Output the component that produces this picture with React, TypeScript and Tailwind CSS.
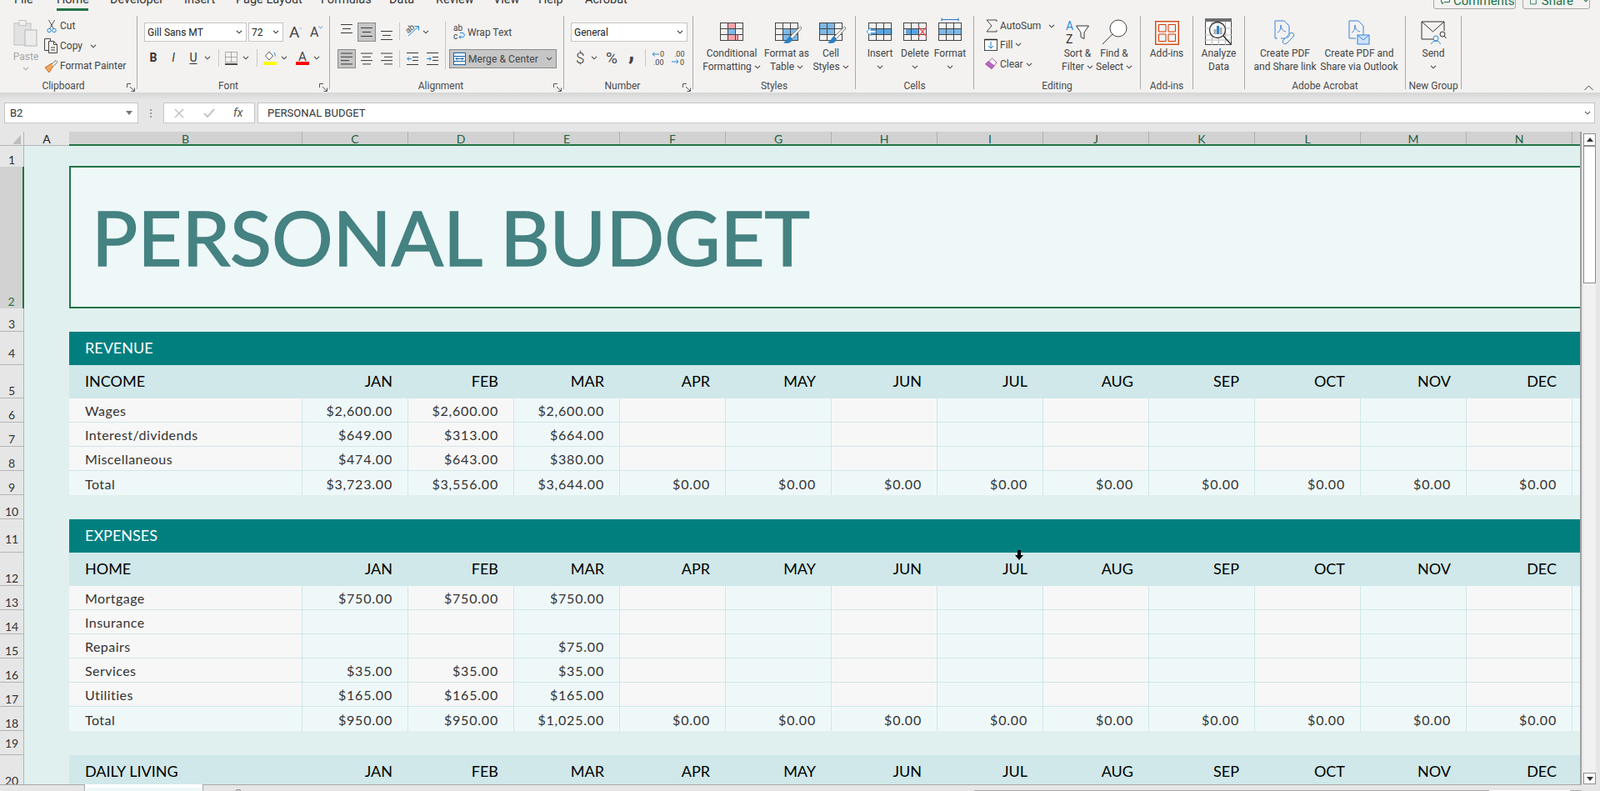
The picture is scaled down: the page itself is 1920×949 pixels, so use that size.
import React from "react";

const Chev = ({ c = "#444" }: { c?: string }) => (
  <svg width="8" height="5" viewBox="0 0 8 5" className="shrink-0"><path d="M1 .8 4 3.8 7 .8" fill="none" stroke={c} strokeWidth="1.1" /></svg>
);
const Launcher = () => (
  <svg width="10" height="10" viewBox="0 0 10 10" className="absolute right-[2px] bottom-[-3px]"><path d="M.5 5V.5H5M4 4l5 5M9.5 5.500v4h-4" fill="none" stroke="#555" /></svg>
);
const Sep = ({ h = "h-[21px]" }: { h?: string }) => <div className={`w-px bg-[#c8c8c8] shrink-0 ${h}`} />;

const Lines = ({ kind }: { kind: "l" | "c" | "r" }) => {
  const xs = kind === "l" ? [[0, 14], [0, 14], [0, 10], [0, 14]] : kind === "c" ? [[0, 14], [2, 12], [0, 14], [2, 12]] : [[0, 14], [4, 14], [0, 14], [4, 14]];
  return (
    <svg width="14" height="15" viewBox="0 0 14 15">
      {xs.map((p, i) => <line key={i} x1={p[0]} x2={p[1]} y1={1 + i * 4.3} y2={1 + i * 4.3} stroke="#3a3a3a" />)}
    </svg>
  );
};
const VAlign = () => (
  <svg width="14" height="11" viewBox="0 0 14 11"><path d="M0 .5h14M2 5.500h10M0 10.500h14" stroke="#3a3a3a" fill="none" /></svg>
);
const Indent = ({ dir }: { dir: "in" | "out" }) => (
  <svg width="14" height="15" viewBox="0 0 14 15">
    <path d="M0 .5h14M7 5.500h7M7 9.500h7M0 14.500h14" stroke="#3a3a3a" fill="none" />
    {dir === "out" ? <path d="M6 7.500H0.8M3 5.300.8 7.500 3 9.700" stroke="#1e88d8" fill="none" /> : <path d="M0 7.500h5.200M3 5.300l2.200 2.200L3 9.700" stroke="#1e88d8" fill="none" />}
  </svg>
);

const Grid = ({ children, after }: { children?: React.ReactNode; after?: React.ReactNode }) => (
  <svg width="32" height="24" viewBox="0 0 32 24" className="overflow-visible">
    {children}
    <rect x="2.500" y="1.500" width="27" height="21" fill="none" stroke="#444" />
    <path d="M11.500 1.500v21M20.500 1.500v21M2.500 8.500h27M2.500 15.500h27" stroke="#444" fill="none" />
    {after}
  </svg>
);
const Brush = () => (
  <g>
    <path d="M32.500 6 20 18l2.500 2.500L34 8z" fill="#fff" stroke="#777" />
    <path d="M20 17.500c-3 .5-3 5-8 7.500 4 2 10 1 11-4.500z" fill="#2e7fc1" />
  </g>
);

const Big = ({ w, icon, a, b, chev, gray }: { w: string; icon: React.ReactNode; a: string; b?: string; chev?: boolean; gray?: boolean }) => (
  <div className={`${w} flex flex-col items-center shrink-0`}>
    <div className="h-[37px] flex items-center justify-center">{icon}</div>
    <div className={`leading-[16px] whitespace-nowrap ${gray ? "text-[#a6a6a6]" : ""}`}>{a}</div>
    <div className="h-[16px] leading-[16px] whitespace-nowrap flex items-center gap-[3px]">
      {b && <span>{b}</span>}
      {chev && <Chev c={gray ? "#a6a6a6" : "#444"} />}
    </div>
  </div>
);

const Group = ({ w, label, launcher, lab = "", children }: { w: string; label?: string; launcher?: boolean; lab?: string; children: React.ReactNode }) => (
  <div className={`${w} h-[88px] shrink-0 relative border-r border-[#aaaaaa] flex flex-col`}>
    <div className="h-[76px] shrink-0">{children}</div>
    <div className={`h-[12px] leading-[16px] text-center whitespace-nowrap text-[#4a4a4a] ${lab}`}>{label}</div>
    {launcher && <Launcher />}
  </div>
);

const Combo = ({ w, text }: { w: string; text: string }) => (
  <div className={`${w} h-[23px] shrink-0 bg-white border border-[#c6c6c6] flex items-center justify-between pl-[3px] pr-[4px] text-[#222]`}>
    <span>{text}</span><Chev c="#333" />
  </div>
);

const TABS: [string, string][] = [
  ["File", "w-[51px]"], ["Home", "w-[64px]"], ["Developer", "w-[89px]"], ["Insert", "w-[62px]"], ["Page Layout", "w-[102px]"],
  ["Formulas", "w-[82px]"], ["Data", "w-[56px]"], ["Review", "w-[69px]"], ["View", "w-[54px]"], ["Help", "w-[56px]"], ["Acrobat", "w-[70px]"],
];

function TopTabs() {
  return (
    <div className="h-[19px] overflow-hidden flex pl-[17px] text-[14.5px] text-[#333]">
      {TABS.map(([t, w]) => (
        <div key={t} className={`${w} shrink-0 -mt-[10px]`}>
          <div className="h-[20px] leading-[20px] whitespace-nowrap">{t}</div>
          {t === "Home" && <div className="h-[3px] w-[38px] bg-[#217346]" />}
        </div>
      ))}
      <div className="ml-auto flex mr-[12px] gap-[8px] text-[#217346] text-[15px]">
        <div className="w-[99px] h-[21px] -mt-[10px] border border-[#a6a6a6] rounded-[3px] flex items-center pl-[8px] leading-[18px]">
          <svg width="11" height="10" viewBox="0 0 11 10" className="mr-[4px]"><path d="M.5.5h10v6H4L1.500 9V6.500h-1z" fill="none" stroke="#217346" /></svg>
          Comments
        </div>
        <div className="w-[81px] h-[21px] -mt-[10px] border border-[#a6a6a6] rounded-[3px] flex items-center pl-[8px] leading-[18px]">
          <svg width="9" height="10" viewBox="0 0 9 10" className="mr-[6px]"><path d="M.5 3v6.500h8V3" fill="none" stroke="#217346" /></svg>
          Share
          <span className="ml-[11px]"><Chev c="#217346" /></span>
        </div>
      </div>
    </div>
  );
}

function Clipboard() {
  return (
    <Group w="w-[165px]" label="Clipboard" launcher lab="pr-[12px]">
      <div className="flex h-full">
        <div className="w-[53px] flex flex-col items-center pl-[9px]">
          <svg width="30" height="34" viewBox="0 0 30 34" className="mt-[4px]">
            <rect x="1" y="5" width="20" height="26" fill="#e2e2e2" stroke="#c2c2c2" />
            <rect x="7" y="1.500" width="8" height="6" fill="#f1f1f1" stroke="#c2c2c2" />
            <rect x="14" y="13" width="14" height="19" fill="#ececec" stroke="#b5b5b5" />
          </svg>
          <div className="text-[#a6a6a6] leading-[16px] mt-[3px]">Paste</div>
          <div className="mt-[4px]"><Chev c="#a6a6a6" /></div>
        </div>
        <div className="flex flex-col">
          <div className="h-[24px] flex items-center">
            <svg width="12" height="17" viewBox="0 0 12 17" className="ml-[3px]"><path d="M2.500 1 8 11M9.500 1 4 11" stroke="#555" fill="none" /><circle cx="3" cy="13.500" r="2.200" fill="none" stroke="#1e88d8" /><circle cx="9" cy="13.500" r="2.200" fill="none" stroke="#1e88d8" /></svg>
            <span className="ml-[4px]">Cut</span>
          </div>
          <div className="h-[24px] flex items-center">
            <svg width="17" height="18" viewBox="0 0 17 18"><path d="M5.500 14.500h-5V.5h7v3" fill="none" stroke="#444" /><path d="M5.500 3.500h6l4 4v10h-10zM11.500 3.500v4h4M8 11h5M8 14h5" fill="none" stroke="#444" /></svg>
            <span className="ml-[2px]">Copy</span>
            <span className="ml-[9px]"><Chev /></span>
          </div>
          <div className="h-[24px] flex items-center">
            <svg width="17" height="17" viewBox="0 0 17 17"><path d="M9 5 1 10l5 6 5-8z" fill="#f0a860" stroke="#d2691e" /><path d="M9 6 14 1.500l2 2L11 8.500" fill="#fff" stroke="#666" /></svg>
            <span className="ml-[2px] whitespace-nowrap">Format Painter</span>
          </div>
        </div>
      </div>
    </Group>
  );
}

function Font() {
  return (
    <Group w="w-[231px]" label="Font" launcher lab="pr-[12px]">
      <div className="pt-[8px] pl-[8px]">
        <div className="flex items-center">
          <Combo w="w-[123px]" text="Gill Sans MT" />
          <Combo w="w-[42px] ml-[2px]" text="72" />
          <div className="ml-[7px] flex items-start w-[16px] text-[19px] leading-[20px] text-[#444]">A<svg width="6" height="4" viewBox="0 0 6 4" className="mt-[3px]"><path d="M.5 3.500 3 1l2.500 2.500" fill="none" stroke="#5f7f9f" /></svg></div>
          <div className="ml-[9px] flex items-start w-[16px] text-[16px] leading-[22px] text-[#444]">A<svg width="6" height="4" viewBox="0 0 6 4" className="mt-[3px]"><path d="M.5.5 3 3l2.500-2.500" fill="none" stroke="#1e88d8" /></svg></div>
        </div>
        <div className="flex items-center h-[23px] mt-[8px] text-[#333]">
          <div className="w-[22px] text-center font-bold text-[14px]">B</div>
          <div className="w-[22px] ml-[2px] text-center italic text-[14px] font-['Liberation_Serif',serif]">I</div>
          <div className="w-[22px] ml-[2px] text-center text-[14px] underline underline-offset-2">U</div>
          <div className="w-[12px] flex justify-center"><Chev /></div>
          <div className="ml-[7px]"><Sep /></div>
          <svg width="15" height="16" viewBox="0 0 15 16" className="ml-[7px]"><path d="M.5.5h14v12H.5zM7.500.5v12M.5 6.500h14" fill="none" stroke="#666" strokeDasharray="1 1" /><path d="M0 15h15" stroke="#111" strokeWidth="1.500" /></svg>
          <div className="w-[10px] ml-[5px] flex justify-center"><Chev /></div>
          <div className="ml-[8px]"><Sep /></div>
          <div className="ml-[7px] w-[16px] flex flex-col items-center">
            <svg width="14" height="13" viewBox="0 0 14 13"><path d="M6 1 1.500 6 6 11 10.500 6z" fill="#fff" stroke="#555" /><path d="M12 2c1 1.500 1.500 3 1 4.500" stroke="#1e88d8" fill="none" /></svg>
            <div className="w-[16px] h-[4px] bg-[#ffff00]" />
          </div>
          <div className="w-[10px] ml-[4px] flex justify-center"><Chev /></div>
          <div className="ml-[9px] w-[16px] flex flex-col items-center">
            <div className="h-[13px] leading-[14px] text-[15px] text-[#444]">A</div>
            <div className="w-[16px] h-[4px] bg-[#ff0000]" />
          </div>
          <div className="w-[10px] ml-[4px] flex justify-center"><Chev /></div>
        </div>
      </div>
    </Group>
  );
}

function Alignment() {
  const box = "h-[23px] bg-[#c6c6c6] border border-[#8a8a8a] flex items-center justify-center";
  return (
    <Group w="w-[281px]" label="Alignment" launcher lab="pr-[14px]">
      <div className="flex pt-[8px]">
        <div className="w-[138px] shrink-0">
          <div className="h-[23px] flex">
            <div className="ml-[13px] pt-[2px]"><VAlign /></div>
            <div className={`ml-[6px] w-[22px] ${box}`}><VAlign /></div>
            <div className="ml-[6px] pt-[10px]"><VAlign /></div>
            <div className="ml-[8px]"><Sep /></div>
            <svg width="17" height="19" viewBox="0 0 17 19" className="ml-[7px]"><text x="0" y="10" fontSize="10" fill="#444" transform="rotate(-40 6 8)" fontFamily="Roboto">ab</text><path d="M3 16 15 5M10.500 4.500h5v5" stroke="#1e88d8" fill="none" /></svg>
            <div className="w-[10px] ml-[2px] flex items-center justify-center"><Chev /></div>
          </div>
          <div className="h-[23px] mt-[9px] flex items-center">
            <div className={`ml-[9px] w-[22px] ${box}`}><Lines kind="l" /></div>
            <div className="ml-[6px]"><Lines kind="c" /></div>
            <div className="ml-[10px]"><Lines kind="r" /></div>
            <div className="ml-[8px]"><Sep /></div>
            <div className="ml-[8px]"><Indent dir="out" /></div>
            <div className="ml-[10px]"><Indent dir="in" /></div>
          </div>
        </div>
        <div className="w-px h-[58px] -mt-[2px] bg-[#c8c8c8] shrink-0" />
        <div className="flex-1">
          <div className="h-[23px] flex items-center pl-[9px]">
            <svg width="15" height="20" viewBox="0 0 15 20"><text x="0" y="8" fontSize="10" fill="#444" fontFamily="Roboto">ab</text><text x="0" y="18" fontSize="10" fill="#444" fontFamily="Roboto">c</text><path d="M7 15.500h4c3 0 3-5 0-5H8M9 13.500l-2 2 2 2" stroke="#1e88d8" fill="none" /></svg>
            <span className="ml-[2px] whitespace-nowrap">Wrap Text</span>
          </div>
          <div className="ml-[4px] w-[129px] h-[23px] mt-[9px] bg-[#c6c6c6] border border-[#8a8a8a] flex items-center pl-[4px]">
            <svg width="15" height="15" viewBox="0 0 15 15"><rect x=".5" y=".5" width="14" height="14" fill="#fff" stroke="#1565a8" /><path d="M.5 4.500h14M.5 10.500h14M3 7.500h9M5 5.500l-2 2 2 2M10 5.500l2 2-2 2" stroke="#1565a8" fill="none" /></svg>
            <span className="ml-[3px] whitespace-nowrap tracking-[0.1px]">Merge &amp; Center</span>
            <span className="ml-[9px]"><Chev /></span>
          </div>
        </div>
      </div>
    </Group>
  );
}

function NumberGroup() {
  return (
    <Group w="w-[155px]" label="Number" launcher lab="pr-[14px]">
      <div className="pt-[8px] pl-[8px]">
        <Combo w="w-[140px]" text="General" />
        <div className="h-[23px] mt-[8px] flex items-center text-[#444]">
          <div className="ml-[6px] w-[9px] text-[19px] leading-[22px] font-light">$</div>
          <div className="ml-[8px] w-[10px] flex justify-center"><Chev /></div>
          <div className="ml-[9px] w-[15px] text-[19px] leading-[22px]">%</div>
          <div className="ml-[12px] w-[9px] text-[30px] leading-[14px] h-[22px] -mt-[8px] font-bold font-['Liberation_Serif',serif]">,</div>
          <div className="ml-[11px]"><Sep /></div>
          <svg width="17" height="20" viewBox="0 0 17 20" className="ml-[7px]"><path d="M9 5H1M3.500 2.500 1 5l2.500 2.500" stroke="#1e88d8" fill="none" /><text x="10" y="8" fontSize="9" fill="#444" fontFamily="Roboto">0</text><text x="2" y="18" fontSize="9" fill="#444" fontFamily="Roboto">.00</text></svg>
          <svg width="17" height="20" viewBox="0 0 17 20" className="ml-[7px]"><text x="3" y="8" fontSize="9" fill="#444" fontFamily="Roboto">.00</text><path d="M0 14h8M5.500 11.500 8 14l-2.500 2.500" stroke="#1e88d8" fill="none" /><text x="10" y="18" fontSize="9" fill="#444" fontFamily="Roboto">0</text></svg>
        </div>
      </div>
    </Group>
  );
}

function Styles() {
  return (
    <Group w="w-[195px]" label="Styles">
      <div className="flex pl-[4px]">
        <Big w="w-[84px]" a="Conditional" b="Formatting" chev icon={
          <Grid>
            <path d="M11.500 1.500h9v7h-9z" fill="#f7a3aa" />
            <path d="M11.500 15.500h12v7h-12z" fill="#f7a3aa" />
            <rect x="11.500" y="8.500" width="9" height="7" fill="#7db8e8" />
            <path d="M11.500 1.500h9v7h-9zM11.500 15.500h12v7h-12z" fill="none" stroke="#e0282e" />
          </Grid>} />
        <Big w="w-[48px]" a="Format as" b="Table" chev icon={
          <Grid after={<Brush />}><rect x="11.500" y="8.500" width="18" height="14" fill="#7db8e8" /></Grid>} />
        <Big w="w-[58px]" a="Cell" b="Styles" chev icon={
          <Grid after={<Brush />}><rect x="2.500" y="1.500" width="18" height="14" fill="#7db8e8" /></Grid>} />
      </div>
    </Group>
  );
}

function Cells() {
  return (
    <Group w="w-[142px]" label="Cells">
      <div className="flex pl-[8px]">
        <Big w="w-[42px]" a="Insert" chev icon={
          <Grid after={<path d="M11 10.500H5V7L0 12l5 5v-3.500h6z" fill="#fff" stroke="#4b9fe0" />}>
            <rect x="2.500" y="8.500" width="28" height="7" fill="#5aa5e2" />
          </Grid>} />
        <Big w="w-[42px]" a="Delete" chev icon={
          <Grid after={<path d="M20 6l10 12M30 6 20 18" stroke="#f0505a" strokeWidth="1.300" fill="none" />}>
            <rect x="5" y="8.500" width="16" height="7" fill="#5aa5e2" />
          </Grid>} />
        <Big w="w-[42px]" a="Format" chev icon={
          <Grid after={<path d="M6 -2.500h20M6 -4.500v4M26 -4.500v4" stroke="#1e78c8" fill="none" />}>
            <rect x="2.500" y="8.500" width="27" height="7" fill="#7db8e8" />
          </Grid>} />
      </div>
    </Group>
  );
}

function Editing() {
  return (
    <Group w="w-[200px]" label="Editing">
      <div className="flex">
        <div className="w-[102px] shrink-0 flex flex-col">
          <div className="h-[22px] mt-[1px] flex items-center pl-[14px]">
            <svg width="14" height="16" viewBox="0 0 14 16"><path d="M13 3V1H1l6 7-6 7h12v-2" fill="none" stroke="#444" /></svg>
            <span className="ml-[3px]">AutoSum</span>
            <span className="ml-[9px]"><Chev /></span>
          </div>
          <div className="h-[23px] flex items-center pl-[12px]">
            <svg width="16" height="15" viewBox="0 0 16 15"><rect x=".5" y="1.500" width="15" height="13" fill="#fff" stroke="#444" /><path d="M.5 1.500h15" stroke="#222" strokeWidth="1.500" /><path d="M8 4v8M5 9l3 3 3-3" stroke="#1e78c8" fill="none" /></svg>
            <span className="ml-[3px]">Fill</span>
            <span className="ml-[3px]"><Chev /></span>
          </div>
          <div className="h-[24px] flex items-center pl-[12px]">
            <svg width="16" height="16" viewBox="0 0 16 16"><path d="M9.500 1 15 6l-6 7.500L2 8z" fill="#fff" stroke="#a64fb0" /><path d="M5 4.500 12 10l-3 3.500L1.500 8z" fill="#b667c0" stroke="#a64fb0" /></svg>
            <span className="ml-[3px]">Clear</span>
            <span className="ml-[3px]"><Chev /></span>
          </div>
        </div>
        <div className="flex">
          <Big w="w-[44px]" a="Sort &" b="Filter" chev icon={
            <div className="flex items-center mt-[2px]">
              <div className="flex flex-col text-[14px] leading-[16px] w-[12px]"><span className="text-[#2b8fd8]">A</span><span className="text-[#333]">Z</span></div>
              <svg width="16" height="18" viewBox="0 0 16 18"><path d="M.5 1h15L10 9v7.500L6 14.500V9z" fill="#fff" stroke="#333" /></svg>
            </div>} />
          <Big w="w-[44px]" a="Find &" b="Select" chev icon={
            <svg width="31" height="31" viewBox="0 0 31 31" className="mt-[2px]"><circle cx="20" cy="11" r="10" fill="#fff" stroke="#444" /><path d="M13 18 1 30" stroke="#444" /></svg>} />
        </div>
      </div>
    </Group>
  );
}

function Ribbon() {
  return (
    <div className="h-[92px] bg-[#f3f2f1] text-[12px] text-[#444] font-[Roboto,sans-serif] flex relative">
      <Clipboard /><Font /><Alignment /><NumberGroup /><Styles /><Cells /><Editing />
      <Group w="w-[63px]" label="Add-ins">
        <div className="flex justify-center">
          <Big w="w-[60px]" a="Add-ins" icon={
            <svg width="29" height="29" viewBox="0 0 29 29" className="mt-[3px]"><rect x=".7" y=".7" width="27.600" height="27.600" fill="none" stroke="#d83b01" strokeWidth="1.300" /><path d="M4.500 4.500h8.500v8.500H4.500zM16 4.500h8.500v8.500H16zM4.500 16h8.500v8.500H4.500zM16 16h8.500v8.500H16z" fill="none" stroke="#d83b01" /></svg>} />
        </div>
      </Group>
      <Group w="w-[62px]">
        <div className="flex justify-center">
          <Big w="w-[60px]" a="Analyze" b="Data" icon={
            <svg width="33" height="33" viewBox="0 0 33 33" className="mt-[2px]">
              <rect x=".5" y=".5" width="31" height="31" fill="#fff" stroke="#444" />
              <rect x="0" y="0" width="32" height="4" fill="#6f6f6f" />
              <path d="M8.500 4v28M16.500 4v28M24.500 4v28M0 12h32M0 20h32M0 26h32" stroke="#b8b8b8" />
              <circle cx="15" cy="14" r="9.500" fill="#f6f6f6" stroke="#333" strokeWidth="1.300" />
              <path d="M22 21l9 10" stroke="#333" strokeWidth="1.500" />
              <rect x="10.500" y="13" width="3" height="6" fill="#aaa" /><rect x="14" y="9" width="3" height="10" fill="#2e86d0" /><rect x="17.500" y="11" width="3" height="8" fill="#aaa" />
            </svg>} />
        </div>
      </Group>
      <Group w="w-[193px]" label="Adobe Acrobat">
        <div className="flex pl-[4px]">
          <Big w="w-[88px]" a="Create PDF" b="and Share link" icon={
            <svg width="26" height="30" viewBox="0 0 26 30" className="mt-[3px]"><path d="M1 1h11l6 6v15H8M1 1v21h3" fill="none" stroke="#3b82d8" /><path d="M4 15c3-1 4-5 4-9 0 4 2 7 6 8" fill="none" stroke="#3b82d8" /><path d="M11 24l8-8c3-2 6 1 4 4l-8 8c-3 2-6-1-4-4z" fill="#f3f2f1" stroke="#3b82d8" /><path d="M15 22l4-4" stroke="#3b82d8" /></svg>} />
          <Big w="w-[90px]" a="Create PDF and" b="Share via Outlook" icon={
            <svg width="26" height="30" viewBox="0 0 26 30" className="mt-[3px]"><path d="M1 1h11l6 6v13M1 1v21h8" fill="none" stroke="#3b82d8" /><path d="M4 15c3-1 4-5 4-9 0 4 2 7 6 8" fill="none" stroke="#3b82d8" /><rect x="11" y="18" width="14" height="11" fill="#cfe3f8" stroke="#3b82d8" /><path d="M11 18l7 6 7-6" fill="none" stroke="#3b82d8" /></svg>} />
        </div>
      </Group>
      <Group w="w-[67px]" label="New Group">
        <div className="flex justify-center">
          <Big w="w-[60px]" a="Send" chev icon={
            <svg width="31" height="28" viewBox="0 0 31 28" className="mt-[3px]"><path d="M15 22H1V1h27v11" fill="none" stroke="#333" /><path d="M1 1l13.500 12L28 1" fill="none" stroke="#333" /><circle cx="18" cy="21" r="3" fill="#f3f2f1" stroke="#2e86d0" /><path d="M12.500 28c1-5 10-5 11 0" fill="none" stroke="#2e86d0" /><circle cx="26" cy="16" r="3" fill="none" stroke="#333" /><path d="M28 18l2.500 3" stroke="#333" /></svg>} />
        </div>
      </Group>
      <svg width="11" height="7" viewBox="0 0 11 7" className="ml-[147px] mt-[83px]"><path d="M.5 6 5.500 1l5 5" fill="none" stroke="#444" /></svg>
    </div>
  );
}

function FormulaBar() {
  return (
    <div className="h-[47px] bg-[#e6e6e6] font-[Roboto,sans-serif] text-[13px] text-[#333]">
      <div className="h-[9px] bg-gradient-to-b from-[#d6d6d6] to-[#e6e6e6]" />
      <div className="flex h-[25px] mt-[3px] pl-[5px]">
        <div className="w-[161px] bg-white border border-[#c6c6c6] flex items-center justify-between pl-[6px] pr-[6px]">
          <span>B2</span>
          <svg width="8" height="5" viewBox="0 0 8 5"><path d="M0 0h8L4 5z" fill="#777" /></svg>
        </div>
        <div className="w-[30px] flex flex-col items-center justify-center gap-[2px]">
          <div className="w-[2px] h-[2px] bg-[#999]" /><div className="w-[2px] h-[2px] bg-[#999]" /><div className="w-[2px] h-[2px] bg-[#999]" />
        </div>
        <div className="w-[110px] bg-white border border-[#c6c6c6] flex items-center">
          <svg width="12" height="12" viewBox="0 0 12 12" className="ml-[12px]"><path d="M1 1l10 10M11 1 1 11" stroke="#c4c4c4" strokeWidth="1.600" /></svg>
          <svg width="14" height="12" viewBox="0 0 14 12" className="ml-[23px]"><path d="M1 6l4 4 8-9" fill="none" stroke="#c4c4c4" strokeWidth="2" /></svg>
          <span className="ml-[22px] italic font-['Liberation_Serif',serif] text-[14px] text-[#555]">fx</span>
        </div>
        <div className="ml-[3px] w-[1605px] bg-white border border-[#c6c6c6] flex items-center justify-between pl-[11px] pr-[4px]">
          <span>PERSONAL BUDGET</span>
          <Chev c="#555" />
        </div>
      </div>
    </div>
  );
}

const COLS = ["C", "D", "E", "F", "G", "H", "I", "J", "K", "L", "M", "N"];
const MONTHS = ["JAN", "FEB", "MAR", "APR", "MAY", "JUN", "JUL", "AUG", "SEP", "OCT", "NOV", "DEC"];

type RowDef = { n: number; h: string; sel?: boolean; pb?: string };
const ROWS: RowDef[] = [
  { n: 1, h: "h-[25px]" }, { n: 2, h: "h-[170px]", sel: true }, { n: 3, h: "h-[28px]" }, { n: 4, h: "h-[40px]", pb: "pb-[5px]" }, { n: 5, h: "h-[40px]" },
  { n: 6, h: "h-[29px]" }, { n: 7, h: "h-[29px]" }, { n: 8, h: "h-[29px]" }, { n: 9, h: "h-[29px]" }, { n: 10, h: "h-[29px]" },
  { n: 11, h: "h-[40px]", pb: "pb-[7px]" }, { n: 12, h: "h-[40px]" }, { n: 13, h: "h-[29px]" }, { n: 14, h: "h-[29px]" }, { n: 15, h: "h-[29px]" },
  { n: 16, h: "h-[29px]" }, { n: 17, h: "h-[29px]" }, { n: 18, h: "h-[29px]" }, { n: 19, h: "h-[29px]", pb: "pb-[5px]" }, { n: 20, h: "h-[40px]" },
];

const Band = ({ text }: { text: string }) => (
  <div className="h-[40px] flex">
    <div className="w-[54px] shrink-0" />
    <div className="flex-1 bg-[#017f7f] text-white text-[18px] flex items-center pl-[19px] pb-[2px]">{text}</div>
  </div>
);
const SubHead = ({ text }: { text: string }) => (
  <div className="h-[40px] flex">
    <div className="w-[54px] shrink-0" />
    <div className="flex-1 flex bg-[#d0e8e9] text-black text-[18px] items-center pb-[2px] overflow-hidden">
      <div className="w-[280px] pl-[19px] shrink-0 whitespace-nowrap">{text}</div>
      {MONTHS.map((m) => <div key={m} className="w-[127px] shrink-0 text-right pr-[19px]">{m}</div>)}
    </div>
  </div>
);
const Body = ({ label, vals, total }: { label: string; vals?: string[]; total?: boolean }) => {
  const line = total ? "" : "border-b border-[#cfe7e8]";
  return (
    <div className="h-[29px] flex text-[#333] text-[16px]">
      <div className="w-[54px] shrink-0" />
      <div className={`w-[280px] shrink-0 pl-[19px] pt-[2px] flex items-center border-r border-[#cfe7e8] tracking-[0.45px] ${line} ${total ? "bg-[#eff8f9]" : "bg-[#f7f7f7]"}`}>{label}</div>
      {COLS.map((c, i) => (
        <div key={c} className={`w-[127px] shrink-0 flex items-center justify-end pr-[18px] pt-[2px] border-r border-[#cfe7e8] tracking-[0.8px] ${line} ${total || i % 2 === 0 ? "bg-[#eff8f9]" : "bg-[#f7f7f7]"}`}>{vals?.[i] ?? ""}</div>
      ))}
      <div className={`flex-1 bg-[#eff8f9] ${line}`} />
    </div>
  );
};
const Blank = ({ h }: { h: string }) => <div className={h} />;
const zero = Array(9).fill("$0.00");

function Sheet() {
  return (
    <div className="flex h-[783px] bg-[#e6e6e6] font-[Lato,sans-serif]">
      <div className="w-[29px] shrink-0 flex flex-col">
        <div className="h-[17px] shrink-0 border-b border-r border-[#b5b5b5] flex items-end justify-end pr-[3px] pb-[1px]">
          <svg width="10" height="11" viewBox="0 0 10 11"><path d="M10 0v11H0z" fill="#bdbdbd" /></svg>
        </div>
        <div className="h-[766px] overflow-hidden">
          {ROWS.map((r) => (
            <div key={r.n} className={`${r.h} ${r.pb ?? ""} flex items-end justify-center text-[14px] leading-[16px] ${r.sel ? "bg-[#d2d2d2] border-r-2 border-[#217346] text-[#217346]" : "text-[#333] border-r border-[#b5b5b5]"} ${r.n > 1 && !r.sel ? "border-b border-b-[#b5b5b5]" : ""}`}>{r.n}</div>
          ))}
        </div>
      </div>
      <div className="w-[1869px] shrink-0 flex flex-col border-r-2 border-[#a0a0a0]">
        <div className="h-[17px] shrink-0 flex text-[14px] leading-[17px] text-center">
          <div className="w-[54px] shrink-0 text-[#222] border-b border-[#b5b5b5]">A</div>
          <div className="flex-1 flex bg-[#d2d2d2] border-b-2 border-[#217346] text-[#1d5f3e] overflow-hidden">
            <div className="w-[280px] shrink-0 border-r border-[#b0b0b0]">B</div>
            {COLS.map((c) => <div key={c} className="w-[127px] shrink-0 border-r border-[#b0b0b0]">{c}</div>)}
          </div>
        </div>
        <div className="h-[766px] overflow-hidden bg-[#e0f0ef]">
          <Blank h="h-[24px]" />
          <div className="ml-[54px] h-[171px] bg-[#eff8f9] border-y-2 border-l-2 border-[#217346] flex items-center pl-[25px] pb-[2px] text-[#458282] text-[92px] [-webkit-text-stroke:1.500px_#458282] whitespace-nowrap">PERSONAL BUDGET</div>
          <Blank h="h-[28px]" />
          <Band text="REVENUE" />
          <SubHead text="INCOME" />
          <Body label="Wages" vals={["$2,600.00", "$2,600.00", "$2,600.00"]} />
          <Body label="Interest/dividends" vals={["$649.00", "$313.00", "$664.00"]} />
          <Body label="Miscellaneous" vals={["$474.00", "$643.00", "$380.00"]} />
          <Body total label="Total" vals={["$3,723.00", "$3,556.00", "$3,644.00", ...zero]} />
          <Blank h="h-[29px]" />
          <Band text="EXPENSES" />
          <SubHead text="HOME" />
          <Body label="Mortgage" vals={["$750.00", "$750.00", "$750.00"]} />
          <Body label="Insurance" />
          <Body label="Repairs" vals={["", "", "$75.00"]} />
          <Body label="Services" vals={["$35.00", "$35.00", "$35.00"]} />
          <Body label="Utilities" vals={["$165.00", "$165.00", "$165.00"]} />
          <Body total label="Total" vals={["$950.00", "$950.00", "$1,025.00", ...zero]} />
          <Blank h="h-[29px]" />
          <SubHead text="DAILY LIVING" />
        </div>
      </div>
      <div className="w-[15px] ml-[2px] mt-[2px] bg-[#f1f1f1] flex flex-col justify-between">
        <div>
          <div className="h-[15px] bg-white border border-[#8f8f8f] flex items-center justify-center">
            <svg width="8" height="5" viewBox="0 0 8 5"><path d="M4 0l4 5H0z" fill="#333" /></svg>
          </div>
          <div className="h-[165px] bg-white border border-[#8f8f8f]" />
        </div>
        <div className="h-[14px] bg-white border border-[#8f8f8f] flex items-center justify-center">
          <svg width="8" height="5" viewBox="0 0 8 5"><path d="M0 0h8L4 5z" fill="#333" /></svg>
        </div>
      </div>
    </div>
  );
}

function SheetTabs() {
  return (
    <div className="h-[8px] flex bg-[#e6e6e6]">
      <div className="w-[101px] border-t border-[#a8a8a8]" />
      <div className="w-[143px] bg-white border-x border-[#a8a8a8] px-[2px] pt-[4px]"><div className="h-full bg-[#eff8f9]" /></div>
      <div className="w-[1654px] border-t border-[#a8a8a8] flex overflow-hidden">
        <div className="ml-[37px] mt-[5px] w-[10px] h-[10px] rounded-full border border-[#777] shrink-0" />
        <div className="ml-auto flex items-end h-full w-[729px]">
          <div className="w-[618px] h-[1px] bg-[#a8a8a8]" />
          <div className="w-[97px] h-[1px] bg-white" />
          <div className="w-[14px] h-[1px] bg-[#a8a8a8]" />
        </div>
      </div>
    </div>
  );
}

export default function App() {
  return (
    <div className="relative w-[1920px] h-[949px] overflow-hidden bg-[#f3f2f1]">
      <div className="font-[Roboto,sans-serif]"><TopTabs /></div>
      <Ribbon />
      <FormulaBar />
      <Sheet />
      <SheetTabs />
      <svg width="10" height="12" viewBox="0 0 10 12" className="absolute left-[1218px] top-[660px]"><path d="M3 0h4v6h3l-5 6-5-6h3z" fill="#000" /></svg>
    </div>
  );
}
